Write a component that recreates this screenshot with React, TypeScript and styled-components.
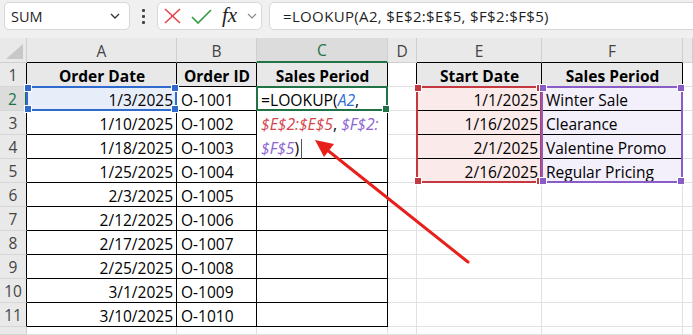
import React from 'react';
import styled, { createGlobalStyle } from 'styled-components';

const GlobalStyle = createGlobalStyle`
  html, body {
    margin: 0;
    padding: 0;
    background: #ffffff;
  }
  body {
    font-family: 'Open Sans', 'Liberation Sans', sans-serif;
    overflow: hidden;
  }
`;

const COLS = ['A', 'B', 'C', 'D', 'E', 'F', ''];

const rows: string[][] = [
  ['Order Date', 'Order ID', 'Sales Period', '', 'Start Date', 'Sales Period'],
  ['1/3/2025', 'O-1001', '', '', '1/1/2025', 'Winter Sale'],
  ['1/10/2025', 'O-1002', '', '', '1/16/2025', 'Clearance'],
  ['1/18/2025', 'O-1003', '', '', '2/1/2025', 'Valentine Promo'],
  ['1/25/2025', 'O-1004', '', '', '2/16/2025', 'Regular Pricing'],
  ['2/3/2025', 'O-1005'],
  ['2/12/2025', 'O-1006'],
  ['2/17/2025', 'O-1007'],
  ['2/25/2025', 'O-1008'],
  ['3/1/2025', 'O-1009'],
  ['3/10/2025', 'O-1010'],
  [],
];

const GRID_LINE = '#e1e1e1';
const INK = '#000000';
const GREEN = '#217346';

const isMain = (r: number, c: number) => r >= 1 && r <= 11 && c <= 2;
const isLookup = (r: number, c: number) => r >= 1 && r <= 5 && (c === 4 || c === 5);

const getFill = (r: number, c: number) => {
  if (r === 1 && (c <= 2 || c === 4 || c === 5)) return '#e8e8e8';
  if (r === 2 && c === 0) return '#e8eef9';
  if (r >= 2 && r <= 5 && c === 4) return '#fbeaea';
  if (r >= 2 && r <= 5 && c === 5) return '#f3effb';
  return '#ffffff';
};

const isDate = (text: string) => /^\d+\/\d+\/\d+$/.test(text);

const App: React.FC = () => (
  <Page>
    <GlobalStyle />
    <Toolbar>
      <NameBox>
        <span>SUM</span>
        <Chevron width="10" height="6" viewBox="0 0 10 6">
          <polyline points="1,1 5,5 9,1" fill="none" stroke="#333" strokeWidth="1.3" />
        </Chevron>
      </NameBox>
      <Dots>
        <Dot />
        <Dot />
        <Dot />
      </Dots>
      <FxBox>
        <svg width="17" height="16" viewBox="0 0 17 16">
          <line x1="1" y1="1" x2="16" y2="15" stroke="#e5484d" strokeWidth="1.7" />
          <line x1="16" y1="1" x2="1" y2="15" stroke="#e5484d" strokeWidth="1.7" />
        </svg>
        <svg width="21" height="15" viewBox="0 0 21 15">
          <polyline points="1,8 7,14 20,1" fill="none" stroke="#3a9b47" strokeWidth="1.7" />
        </svg>
        <FxLabel>fx</FxLabel>
        <Chevron width="10" height="6" viewBox="0 0 10 6">
          <polyline points="1,1 5,5 9,1" fill="none" stroke="#8a8a8a" strokeWidth="1.2" />
        </Chevron>
      </FxBox>
      <FormulaInput>=LOOKUP(A2, $E$2:$E$5, $F$2:$F$5)</FormulaInput>
    </Toolbar>

    <Sheet>
      <Corner $row={1} $col={1}>
        <svg width="20" height="18" viewBox="0 0 20 18">
          <polygon points="19,2 19,17 2,17" fill="#c8c8c8" />
        </svg>
      </Corner>
      {COLS.map((letter, c) => (
        <ColHeader
          key={`h${c}`}
          $row={1}
          $col={c + 2}
          $active={c === 2}
          $edge={c <= 2 || c === 4 || c === 5}
        >
          {letter}
        </ColHeader>
      ))}

      {rows.map((cells, i) => {
        const r = i + 1;
        return (
          <React.Fragment key={`r${r}`}>
            <RowHeader $row={r + 1} $col={1} $active={r === 2} $edge={r <= 11}>
              {r <= 11 ? r : ''}
            </RowHeader>
            {COLS.map((_, c) => {
              const text = cells[c] || '';
              const right = isMain(r, c) || isLookup(r, c) || (c === 3 && r <= 5);
              const bottom = isMain(r, c) || isLookup(r, c);
              return (
                <Cell
                  key={`c${r}-${c}`}
                  $row={r + 1}
                  $col={c + 2}
                  $fill={getFill(r, c)}
                  $right={right}
                  $bottom={bottom}
                  $bold={r === 1}
                  $align={r === 1 ? 'center' : isDate(text) ? 'right' : 'left'}
                >
                  {text}
                </Cell>
              );
            })}
          </React.Fragment>
        );
      })}

      <RangeBox $row="3 / 4" $col="2 / 3" $color="#2f6bcf">
        <Handle $x="left" $y="top" $color="#2f6bcf" />
        <Handle $x="right" $y="top" $color="#2f6bcf" />
        <Handle $x="left" $y="bottom" $color="#2f6bcf" />
        <Handle $x="right" $y="bottom" $color="#2f6bcf" />
      </RangeBox>
      <RangeBox $row="3 / 7" $col="6 / 7" $color="#c4393f">
        <Handle $x="left" $y="top" $color="#c4393f" />
        <Handle $x="right" $y="top" $color="#c4393f" />
        <Handle $x="left" $y="bottom" $color="#c4393f" />
        <Handle $x="right" $y="bottom" $color="#c4393f" />
      </RangeBox>
      <RangeBox $row="3 / 7" $col="7 / 8" $color="#8a5cc8">
        <Handle $x="left" $y="top" $color="#8a5cc8" />
        <Handle $x="right" $y="top" $color="#8a5cc8" />
        <Handle $x="left" $y="bottom" $color="#8a5cc8" />
        <Handle $x="right" $y="bottom" $color="#8a5cc8" />
      </RangeBox>

      <EditBox>
        <EditLine>
          =LOOKUP(<Ref $color="#2f6fd6">A2</Ref>,
        </EditLine>
        <EditLine>
          <Ref $color="#d5434b">$E$2:$E$5</Ref>, <Ref $color="#8c63d3">$F$2:</Ref>
        </EditLine>
        <EditLine>
          <Ref $color="#8c63d3">$F$5</Ref>)<Caret />
        </EditLine>
      </EditBox>
      <ActiveBox>
        <Handle $x="right" $y="bottom" $color={GREEN} />
      </ActiveBox>
    </Sheet>

    <Arrow width="693" height="335" viewBox="0 0 693 335">
      <line x1="468" y1="262" x2="326" y2="149" stroke="#e8201c" strokeWidth="3" strokeLinecap="round" />
      <polygon points="315,140 334,144 324,157" fill="#e8201c" />
    </Arrow>
  </Page>
);

const Page = styled.div`
  position: relative;
  width: 693px;
  height: 335px;
  overflow: hidden;
  background: #ffffff;
`;

const Toolbar = styled.div`
  display: flex;
  align-items: flex-start;
  height: 38px;
  padding: 2px 0 0 4px;
  box-sizing: border-box;
  background: #f1f0f0;
  overflow: hidden;
`;

const InputBox = styled.div`
  display: flex;
  align-items: center;
  height: 28px;
  box-sizing: border-box;
  background: #ffffff;
  border: 1px solid #d9d6d6;
  border-radius: 5px;
  font-family: 'Open Sans', 'Liberation Sans', sans-serif;
  font-size: 14.5px;
  color: #1f1f1f;
`;

const NameBox = styled(InputBox)`
  width: 126px;
  justify-content: space-between;
  padding: 0 9px 0 6px;
`;

const Chevron = styled.svg`
  display: block;
`;

const Dots = styled.div`
  display: flex;
  flex-direction: column;
  align-items: center;
  justify-content: center;
  gap: 3px;
  width: 27px;
  height: 28px;
`;

const Dot = styled.span`
  width: 3px;
  height: 3px;
  border-radius: 1px;
  background: #444444;
`;

const FxBox = styled(InputBox)`
  width: 105px;
  padding: 0 4px 0 6px;
  justify-content: space-between;
`;

const FxLabel = styled.span`
  font-family: 'Liberation Serif', serif;
  font-style: italic;
  font-size: 21px;
  line-height: 1;
  color: #222222;
  margin-bottom: 2px;
`;

const FormulaInput = styled(InputBox)`
  flex: 1;
  margin-left: 7px;
  margin-right: -10px;
  padding-left: 13px;
  font-size: 15px;
  letter-spacing: 0.35px;
  white-space: nowrap;
`;

const Sheet = styled.div`
  display: grid;
  grid-template-columns: 27px 150px 80px 131px 29px 125px 141px 1fr;
  grid-template-rows: 25px repeat(11, 24px) 1fr;
  height: 297px;
  overflow: hidden;
`;

type Placed = { $row: number; $col: number };

const Corner = styled.div<Placed>`
  grid-row: ${({ $row }) => $row};
  grid-column: ${({ $col }) => $col};
  display: flex;
  align-items: flex-end;
  justify-content: flex-end;
  background: #e9e9e9;
  border-right: 1px solid #cfcfcf;
  border-bottom: 1px solid #cfcfcf;
  box-sizing: border-box;
  padding: 0 2px 2px 0;
`;

const ColHeader = styled.div<Placed & { $active: boolean; $edge: boolean }>`
  grid-row: ${({ $row }) => $row};
  grid-column: ${({ $col }) => $col};
  display: flex;
  align-items: center;
  justify-content: center;
  box-sizing: border-box;
  background: ${({ $active }) => ($active ? '#dcdcdc' : '#e9e9e9')};
  border-right: 1px solid #cfcfcf;
  border-bottom: ${({ $active, $edge }) =>
    $active ? `2px solid ${GREEN}` : `1px solid ${$edge ? INK : '#cfcfcf'}`};
  color: ${({ $active }) => ($active ? GREEN : '#444444')};
  font-size: 15.5px;
  padding-top: 1px;
`;

const RowHeader = styled.div<Placed & { $active: boolean; $edge: boolean }>`
  grid-row: ${({ $row }) => $row};
  grid-column: ${({ $col }) => $col};
  display: flex;
  align-items: center;
  justify-content: center;
  box-sizing: border-box;
  padding-top: 1px;
  background: ${({ $active }) => ($active ? '#dcdcdc' : '#e9e9e9')};
  border-bottom: 1px solid #d6d6d6;
  border-right: ${({ $active, $edge }) =>
    $active ? `2px solid ${GREEN}` : `1px solid ${$edge ? INK : '#cfcfcf'}`};
  color: ${({ $active }) => ($active ? GREEN : '#444444')};
  font-size: 15.5px;
`;

const Cell = styled.div<
  Placed & {
    $fill: string;
    $right: boolean;
    $bottom: boolean;
    $bold: boolean;
    $align: 'left' | 'right' | 'center';
  }
>`
  grid-row: ${({ $row }) => $row};
  grid-column: ${({ $col }) => $col};
  display: flex;
  align-items: center;
  justify-content: ${({ $align }) =>
    $align === 'right' ? 'flex-end' : $align === 'center' ? 'center' : 'flex-start'};
  box-sizing: border-box;
  padding: 2px 3px 0 4px;
  background: ${({ $fill }) => $fill};
  border-right: 1px solid ${({ $right }) => ($right ? INK : GRID_LINE)};
  border-bottom: 1px solid ${({ $bottom }) => ($bottom ? INK : GRID_LINE)};
  font-size: 15.5px;
  font-weight: ${({ $bold }) => ($bold ? 700 : 400)};
  color: #000000;
  white-space: nowrap;
  overflow: hidden;
`;

const RangeBox = styled.div<{ $row: string; $col: string; $color: string }>`
  grid-row: ${({ $row }) => $row};
  grid-column: ${({ $col }) => $col};
  position: relative;
  z-index: 2;
  margin: -1px 0 0 -1px;
  border: 2px solid ${({ $color }) => $color};
  pointer-events: none;
`;

const Handle = styled.span<{ $x: 'left' | 'right'; $y: 'top' | 'bottom'; $color: string }>`
  position: absolute;
  ${({ $x }) => $x}: -4px;
  ${({ $y }) => $y}: -4px;
  width: 6px;
  height: 6px;
  background: ${({ $color }) => $color};
  border: 1px solid #ffffff;
`;

const EditBox = styled.div`
  grid-row: 3 / 6;
  grid-column: 4 / 5;
  z-index: 3;
  margin: 0 1px 1px 0;
  padding: 2px 0 0 4px;
  background: #ffffff;
  font-size: 15.7px;
  color: #000000;
`;

const EditLine = styled.div`
  height: 24px;
  line-height: 23px;
  white-space: nowrap;
`;

const Ref = styled.span<{ $color: string }>`
  color: ${({ $color }) => $color};
  font-style: italic;
`;

const Caret = styled.span`
  display: inline-block;
  width: 1px;
  height: 20px;
  margin-left: 2px;
  vertical-align: -5px;
  background: #555555;
`;

const ActiveBox = styled.div`
  grid-row: 3 / 4;
  grid-column: 4 / 5;
  position: relative;
  z-index: 4;
  margin: -1px 0 0 -1px;
  border: 2px solid ${GREEN};
  pointer-events: none;
`;

const Arrow = styled.svg`
  position: absolute;
  top: 0;
  left: 0;
  pointer-events: none;
  z-index: 10;
`;

export default App;
